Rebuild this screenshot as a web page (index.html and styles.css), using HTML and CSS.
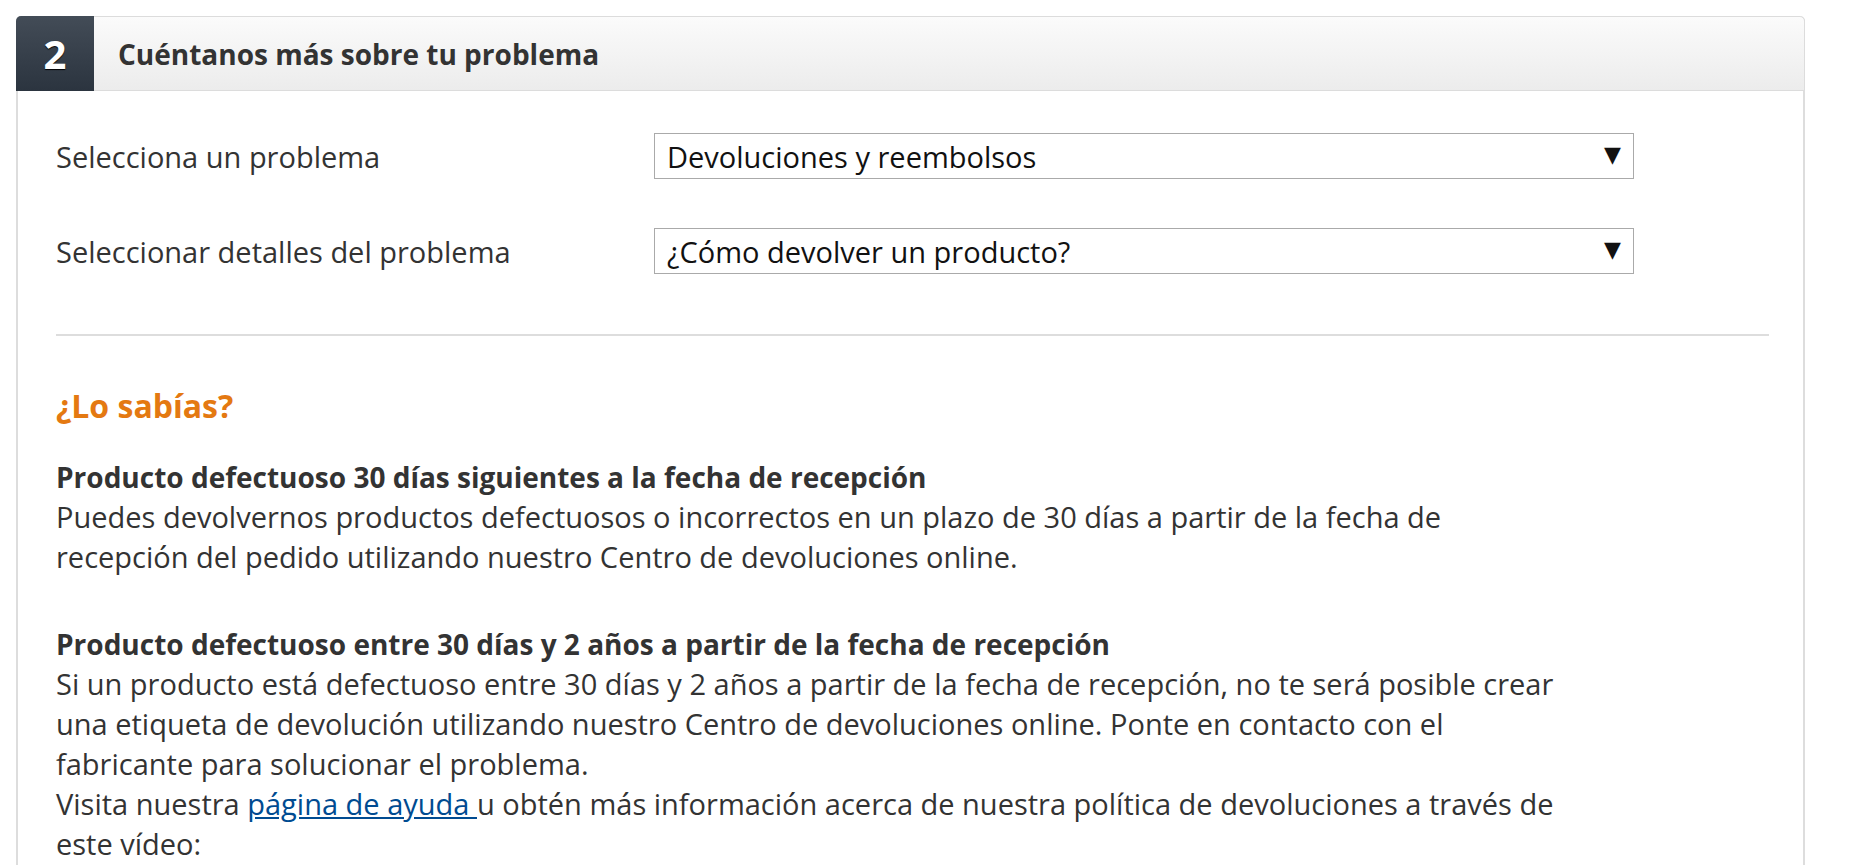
FILE: index.html
```html
<!DOCTYPE html>
<html lang="es">
<head>
    <meta charset="UTF-8">
    <meta name="viewport" content="width=device-width, initial-scale=1.0">
    <title>Cuéntanos más sobre tu problema</title>
    <link rel="stylesheet" href="styles.css">
</head>
<body>
    <div class="card">
        <div class="card-header">
            <div class="step">2</div>
            <h2 class="card-title">Cuéntanos más sobre tu problema</h2>
        </div>

        <div class="card-body">
            <div class="form-row">
                <label for="issue">Selecciona un problema</label>
                <div class="select">
                    <select id="issue">
                        <option>Devoluciones y reembolsos</option>
                    </select>
                    <span class="arrow">▼</span>
                </div>
            </div>

            <div class="form-row">
                <label for="details">Seleccionar detalles del problema</label>
                <div class="select">
                    <select id="details">
                        <option>¿Cómo devolver un producto?</option>
                    </select>
                    <span class="arrow">▼</span>
                </div>
            </div>

            <hr class="divider">

            <h3 class="did-you-know">¿Lo sabías?</h3>

            <div class="info">
                <p class="info-title">Producto defectuoso 30 días siguientes a la fecha de recepción</p>
                <p>Puedes devolvernos productos defectuosos o incorrectos en un plazo de 30 días a partir de la fecha de<br>
                recepción del pedido utilizando nuestro Centro de devoluciones online.</p>
            </div>

            <div class="info">
                <p class="info-title">Producto defectuoso entre 30 días y 2 años a partir de la fecha de recepción</p>
                <p>Si un producto está defectuoso entre 30 días y 2 años a partir de la fecha de recepción, no te será posible crear<br>
                una etiqueta de devolución utilizando nuestro Centro de devoluciones online. Ponte en contacto con el<br>
                fabricante para solucionar el problema.<br>
                Visita nuestra <a href="#">página de ayuda </a>u obtén más información acerca de nuestra política de devoluciones a través de<br>
                este vídeo:</p>
            </div>
        </div>
    </div>
</body>
</html>
```

FILE: styles.css
```css
body {
    margin: 0;
    padding: 16px 0 0 16px;
    font-family: "Open Sans", "Noto Sans", Arial, sans-serif;
    color: #333;
    background: #fff;
}
.card {
    width: 1789px;
    border: 2px solid #ddd;
    border-top: none;
    border-radius: 5px 5px 0 0;
    box-sizing: border-box;
}
.card-header {
    display: flex;
    align-items: center;
    height: 75px;
    margin: 0 -2px;
    background: linear-gradient(#fbfbfb, #ececec);
    border: 1px solid #dcdcdc;
    border-radius: 5px 5px 0 0;
    box-sizing: border-box;
}
.step {
    width: 78px;
    height: 75px;
    margin: -1px 0 -1px -1px;
    display: flex;
    align-items: center;
    justify-content: center;
    background: linear-gradient(#434c57, #2b343f);
    border-radius: 5px 0 0 0;
    color: #fff;
    font-size: 40px;
    font-weight: bold;
    text-shadow: 0 1px 1px #000;
}
.card-title {
    margin: 0 0 0 24px;
    font-size: 28px;
    font-weight: bold;
    color: #333;
}
.card-body {
    padding: 42px 34px 0 38px;
}
.form-row {
    display: grid;
    grid-template-columns: 598px 980px;
    align-items: center;
    margin-bottom: 49px;
}
.form-row label {
    font-size: 29px;
}
.select {
    position: relative;
}
.select select {
    width: 100%;
    height: 46px;
    padding: 0 44px 0 12px;
    border: 1px solid #aaa;
    border-radius: 0;
    background: #fff;
    font-family: inherit;
    font-size: 29px;
    color: #111;
    appearance: none;
    -webkit-appearance: none;
}
.arrow {
    position: absolute;
    right: 13px;
    top: 7px;
    font-family: "DejaVu Sans", sans-serif;
    font-size: 22px;
    line-height: 30px;
    color: #111;
    pointer-events: none;
}
.divider {
    margin: 60px 0 0;
    border: none;
    border-top: 2px solid #ddd;
}
.did-you-know {
    margin: 50px 0 32px;
    font-size: 32px;
    line-height: 39px;
    font-weight: bold;
    color: #e47911;
}
.info {
    margin-bottom: 47px;
    font-size: 29px;
    line-height: 40px;
}
.info p {
    margin: 0;
}
.info-title {
    font-size: 28px;
    font-weight: bold;
}
a {
    color: #004b91;
}
```
